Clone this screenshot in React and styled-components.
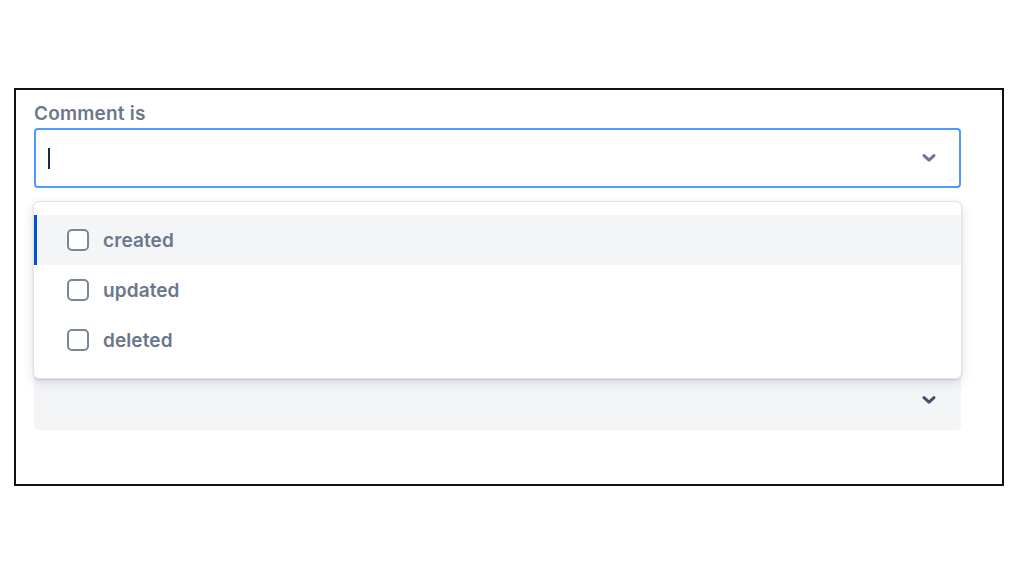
import styled, { createGlobalStyle } from "styled-components";

const GlobalStyle = createGlobalStyle`
  html, body {
    margin: 0;
    padding: 0;
    background: #ffffff;
    font-family: Inter, "Noto Sans", "Liberation Sans", sans-serif;
  }
`;

const Page = styled.div`
  width: 1024px;
  height: 576px;
  padding: 88px 0 0 14px;
  box-sizing: border-box;
`;

const Frame = styled.div`
  width: 990px;
  height: 398px;
  box-sizing: border-box;
  border: 2px solid #111111;
  padding: 12px 41px 0 18px;
`;

const Field = styled.div`
  position: relative;
  display: flex;
  flex-direction: column;
`;

const Label = styled.label`
  font-size: 19px;
  font-weight: 600;
  color: #6b778c;
  line-height: 24px;
  margin-bottom: 2px;
  letter-spacing: 0.2px;
`;

const Control = styled.div`
  height: 60px;
  box-sizing: border-box;
  display: flex;
  align-items: center;
  justify-content: space-between;
  padding: 0 22px 0 12px;
  border-radius: 4px;
  border: 2px solid ${({ $focused }) => ($focused ? "#4c9aff" : "#f4f5f7")};
  background: ${({ $focused }) => ($focused ? "#ffffff" : "#f4f5f7")};
  margin-top: ${({ $gap }) => $gap || 0}px;
`;

const Caret = styled.span`
  display: block;
  width: 2px;
  height: 21px;
  background: #172b4d;
`;

const Menu = styled.div`
  position: absolute;
  top: 99px;
  left: -1px;
  right: -1px;
  background: #ffffff;
  border: 1px solid #e1e3e8;
  border-radius: 6px;
  box-shadow: 0 4px 12px rgba(9, 30, 66, 0.12), 0 1px 2px rgba(9, 30, 66, 0.14);
  padding: 13px 0;
  z-index: 2;
`;

const Option = styled.div`
  height: 50px;
  display: flex;
  align-items: center;
  gap: 14px;
  padding-left: 30px;
  box-sizing: border-box;
  background: ${({ $active }) => ($active ? "#f4f5f7" : "transparent")};
  border-left: 3px solid ${({ $active }) => ($active ? "#0052cc" : "transparent")};
  font-size: 19px;
  font-weight: 600;
  color: #6b778c;
  letter-spacing: 0.1px;
`;

const Box = styled.span`
  width: 22px;
  height: 22px;
  box-sizing: border-box;
  border: 2.5px solid #7a869a;
  border-radius: 5px;
  background: #ffffff;
`;

function Chevron({ color }) {
  return (
    <svg width="16" height="10" viewBox="0 0 16 10">
      <path
        d="M3 2.6 L8 7.2 L13 2.6"
        fill="none"
        stroke={color}
        strokeWidth="3"
        strokeLinecap="round"
        strokeLinejoin="round"
      />
    </svg>
  );
}

const options = ["created", "updated", "deleted"];

export default function App() {
  return (
    <>
      <GlobalStyle />
      <Page>
        <Frame>
          <Field>
            <Label>Comment is</Label>
            <Control $focused>
              <Caret />
              <Chevron color="#6b778c" />
            </Control>
            <Menu>
              {options.map((o, i) => (
                <Option key={o} $active={i === 0}>
                  <Box />
                  <span>{o}</span>
                </Option>
              ))}
            </Menu>
          </Field>
          <Control $gap={182}>
            <span />
            <Chevron color="#42526e" />
          </Control>
        </Frame>
      </Page>
    </>
  );
}
